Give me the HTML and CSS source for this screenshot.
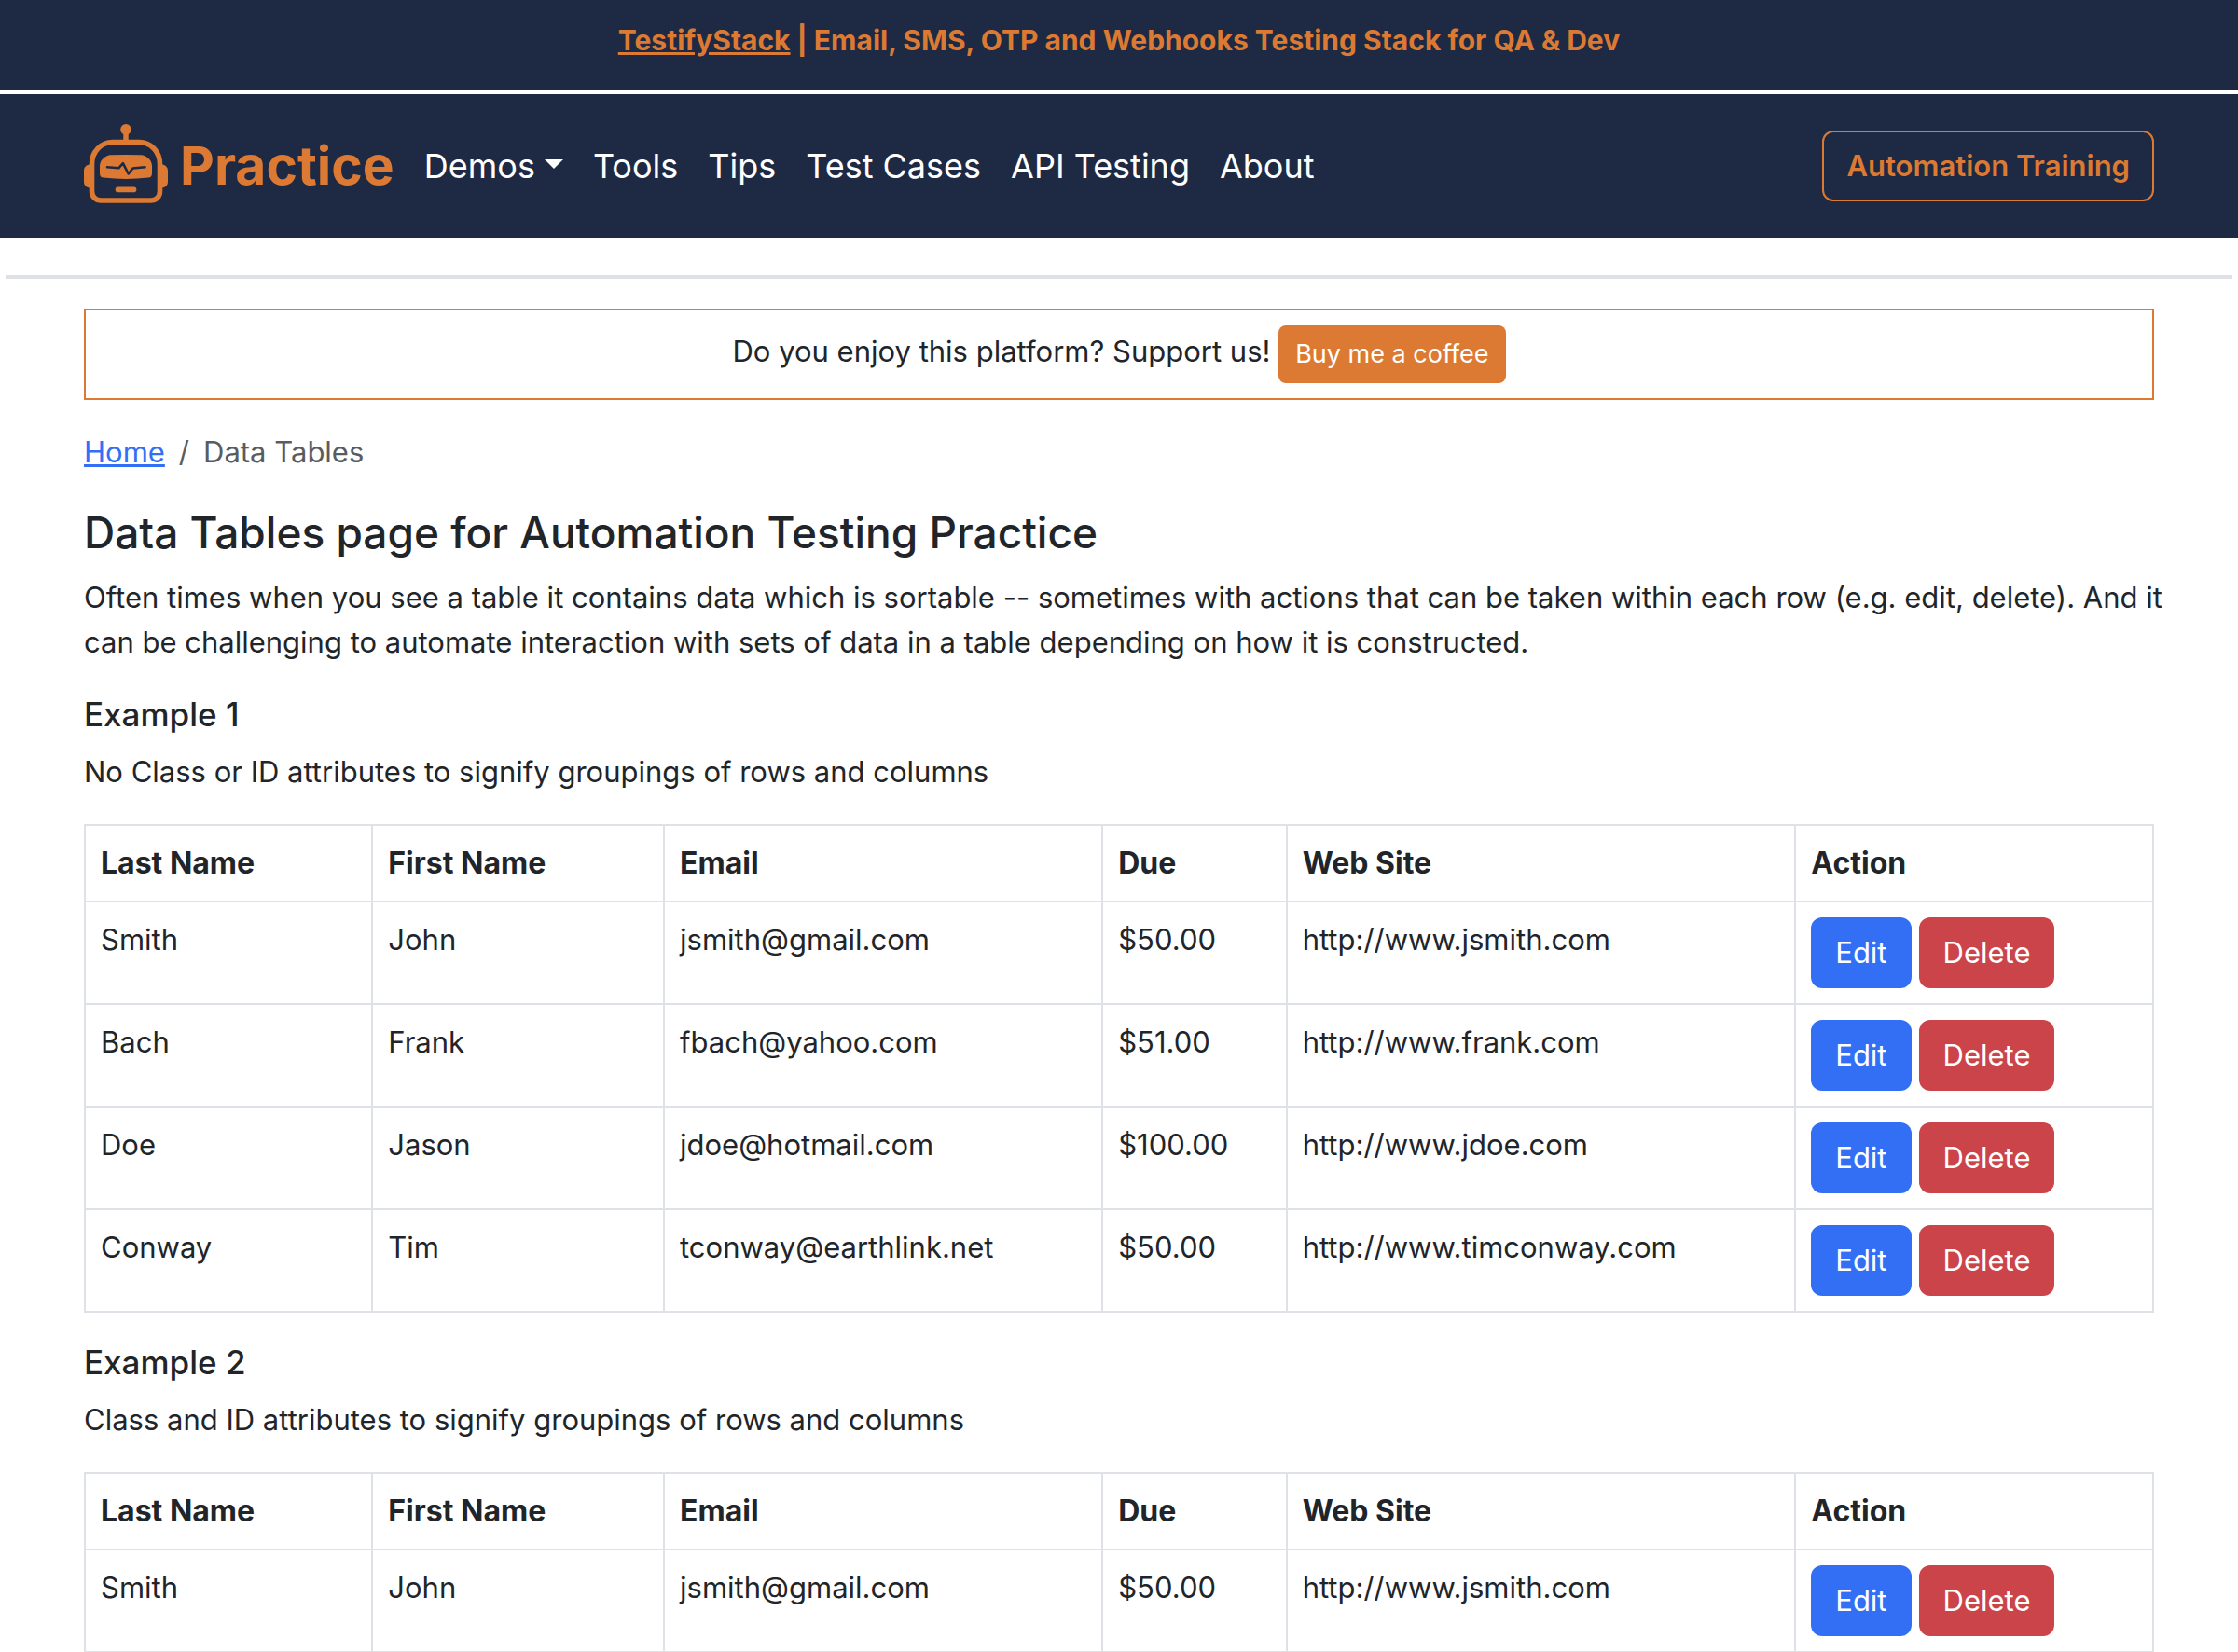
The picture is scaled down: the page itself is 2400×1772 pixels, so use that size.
FILE: index.html
```html
<!DOCTYPE html>
<html lang="en">
<head>
  <meta charset="utf-8">
  <meta name="viewport" content="width=device-width, initial-scale=1">
  <title>Data Tables page for Automation Testing Practice</title>
  <link rel="stylesheet" href="styles.css">
</head>
<body>
  <div class="promo">
    <a class="promo-link" href="#">TestifyStack</a> | Email, SMS, OTP and Webhooks Testing Stack for QA &amp; Dev
  </div>

  <header class="navbar">
    <a class="brand" href="#">
      <svg class="brand-icon" viewBox="0 0 90 85" aria-hidden="true">
        <circle cx="45" cy="5.8" r="5.8" fill="currentColor"/>
        <path d="M45 8V19" stroke="currentColor" stroke-width="5.4"/>
        <path d="M6 43.5C2.500 44 0 46.500 0 50V62C0 65.500 2.500 68 6 68.500ZM84 43.500C87.500 44 90 46.500 90 50V62C90 65.500 87.500 68 84 68.500Z" fill="currentColor"/>
        <path d="M31 19.500H59C72 19.500 81.500 30 81.500 43V72C81.500 78 77.500 82 71.500 82H18.500C12.500 82 8.500 78 8.500 72V43C8.500 30 18 19.500 31 19.500Z" fill="none" stroke="currentColor" stroke-width="5.6"/>
        <path d="M28 33.300Q45 32.500 62 33.300C68 34.200 73 39.500 73 45V53C73 56 71.500 57.200 69 57.600Q45 60.500 21 57.600C18.500 57.200 17 56 17 53V45C17 39.500 22 34.200 28 33.300Z" fill="currentColor"/>
        <path d="M25 46.300L37.300 47.300L41.900 42.200L47.700 53.500L52.500 47.500L65.500 46.300" fill="none" stroke="#1e2a44" stroke-width="2.6" stroke-linecap="round" stroke-linejoin="round"/>
        <rect x="33.700" y="67.600" width="22.600" height="5.600" rx="2.800" fill="currentColor"/>
      </svg>
      Practice
    </a>
    <nav class="menu">
      <button class="menu-item dropdown" type="button">Demos</button>
      <a class="menu-item" href="#">Tools</a>
      <a class="menu-item" href="#">Tips</a>
      <a class="menu-item" href="#">Test Cases</a>
      <a class="menu-item" href="#">API Testing</a>
      <a class="menu-item" href="#">About</a>
    </nav>
    <a class="btn btn-outline" href="#">Automation Training</a>
  </header>

  <hr class="divider">

  <main class="container">
    <div class="support">
      Do you enjoy this platform? Support us! <a class="btn btn-small" href="#">Buy me a coffee</a>
    </div>

    <nav aria-label="breadcrumb">
      <ol class="breadcrumb">
        <li><a href="#">Home</a></li>
        <li class="current" aria-current="page">Data Tables</li>
      </ol>
    </nav>

    <h1 class="page-title">Data Tables page for Automation Testing Practice</h1>
    <p class="text">Often times when you see a table it contains data which is sortable -- sometimes with actions that can be taken within each row (e.g. edit, delete). And it can be challenging to automate interaction with sets of data in a table depending on how it is constructed.</p>

    <h2 class="example-title">Example 1</h2>
    <p class="text">No Class or ID attributes to signify groupings of rows and columns</p>
    <table class="data-table">
      <colgroup><col class="col-last"><col class="col-first"><col class="col-email"><col class="col-due"><col class="col-site"><col></colgroup>
      <thead>
        <tr><th>Last Name</th><th>First Name</th><th>Email</th><th>Due</th><th>Web Site</th><th>Action</th></tr>
      </thead>
      <tbody>
        <tr><td>Smith</td><td>John</td><td>jsmith@gmail.com</td><td>$50.00</td><td>http://www.jsmith.com</td>
          <td><div class="actions"><button class="btn btn-primary" type="button">Edit</button><button class="btn btn-danger" type="button">Delete</button></div></td></tr>
        <tr><td>Bach</td><td>Frank</td><td>fbach@yahoo.com</td><td>$51.00</td><td>http://www.frank.com</td>
          <td><div class="actions"><button class="btn btn-primary" type="button">Edit</button><button class="btn btn-danger" type="button">Delete</button></div></td></tr>
        <tr><td>Doe</td><td>Jason</td><td>jdoe@hotmail.com</td><td>$100.00</td><td>http://www.jdoe.com</td>
          <td><div class="actions"><button class="btn btn-primary" type="button">Edit</button><button class="btn btn-danger" type="button">Delete</button></div></td></tr>
        <tr><td>Conway</td><td>Tim</td><td>tconway@earthlink.net</td><td>$50.00</td><td>http://www.timconway.com</td>
          <td><div class="actions"><button class="btn btn-primary" type="button">Edit</button><button class="btn btn-danger" type="button">Delete</button></div></td></tr>
      </tbody>
    </table>

    <h2 class="example-title">Example 2</h2>
    <p class="text">Class and ID attributes to signify groupings of rows and columns</p>
    <table class="data-table">
      <colgroup><col class="col-last"><col class="col-first"><col class="col-email"><col class="col-due"><col class="col-site"><col></colgroup>
      <thead>
        <tr><th>Last Name</th><th>First Name</th><th>Email</th><th>Due</th><th>Web Site</th><th>Action</th></tr>
      </thead>
      <tbody>
        <tr><td>Smith</td><td>John</td><td>jsmith@gmail.com</td><td>$50.00</td><td>http://www.jsmith.com</td>
          <td><div class="actions"><button class="btn btn-primary" type="button">Edit</button><button class="btn btn-danger" type="button">Delete</button></div></td></tr>
      </tbody>
    </table>
  </main>
</body>
</html>
```
FILE: styles.css
```css
* {
  box-sizing: border-box;
}

body {
  margin: 0;
  background: #fff;
  color: #212529;
  font-family: Inter, "Liberation Sans", sans-serif;
  font-size: 31px;
  line-height: 48px;
}

/* Top strip */
.promo {
  padding: 19px 24px 30px;
  border-bottom: 4px solid #fff;
  background: #1e2a44;
  background-clip: padding-box;
  color: #dc7a33;
  font-size: 30px;
  font-weight: 700;
  text-align: center;
}

.promo-link {
  color: inherit;
}

/* Navigation bar */
.navbar {
  display: flex;
  align-items: center;
  padding: 32px 90px;
  background: #1e2a44;
}

.brand {
  display: flex;
  align-items: center;
  gap: 13px;
  margin-right: 32px;
  color: #dc7a33;
  font-size: 57px;
  font-weight: 700;
  line-height: 90px;
  text-decoration: none;
}

.brand-icon {
  width: 90px;
  height: 85px;
  margin-bottom: 5px;
}

.menu {
  display: flex;
  flex: 1;
  gap: 32px;
}

.menu-item {
  padding: 0;
  border: 0;
  background: none;
  color: #fff;
  font: inherit;
  font-size: 36px;
  line-height: 60px;
  text-decoration: none;
}

.dropdown {
  display: flex;
  align-items: center;
  gap: 10px;
}

.dropdown::after {
  content: "";
  border: 10px solid transparent;
  border-top-color: #fff;
  border-bottom: 0;
  margin-bottom: 4px;
}

/* Buttons */
.btn {
  display: inline-block;
  padding: 12px 24px;
  border: 2px solid transparent;
  border-radius: 12px;
  color: #fff;
  font: inherit;
  line-height: 48px;
  text-decoration: none;
}

.btn-outline {
  border-color: #dc7a33;
  color: #dc7a33;
  font-weight: 600;
}

.btn-small {
  padding: 8px 16px;
  border-radius: 8px;
  background: #dc7a33;
  font-size: 27px;
  line-height: 42px;
  vertical-align: middle;
}

.btn-primary {
  background: #326ff5;
}

.btn-danger {
  background: #ca444a;
}

/* Content */
.divider {
  height: 4px;
  margin: 40px 6px 32px;
  border: 0;
  background: #dee2e6;
}

.container {
  padding: 0 90px;
}

.support {
  padding: 16px;
  border: 2px solid #dc7a33;
  text-align: center;
}

.breadcrumb {
  display: flex;
  margin: 32px 0;
  padding: 0;
  list-style: none;
}

.breadcrumb a {
  color: #326ff5;
}

.current {
  color: #595c5f;
}

.current::before {
  content: "/";
  padding: 0 15px;
}

.page-title {
  margin: 0 0 16px;
  font-size: 46px;
  font-weight: 500;
  line-height: 60px;
}

.text {
  margin: 0 -16px 32px 0;
}

.example-title {
  margin: 0 0 16px;
  font-size: 35px;
  font-weight: 500;
  line-height: 43px;
}

.data-table {
  width: 100%;
  margin-bottom: 32px;
  border-collapse: collapse;
  table-layout: fixed;
}

.data-table th,
.data-table td {
  padding: 16px;
  border: 2px solid #dee2e6;
  text-align: left;
  vertical-align: top;
}

.data-table th {
  font-size: 32px;
}

.data-table:last-child {
  margin-bottom: 0;
}

.col-last {
  width: 13.9%;
}

.col-first {
  width: 14.1%;
}

.col-email {
  width: 21.2%;
}

.col-due {
  width: 8.9%;
}

.col-site {
  width: 24.6%;
}

.actions {
  display: flex;
  gap: 8px;
}
```
